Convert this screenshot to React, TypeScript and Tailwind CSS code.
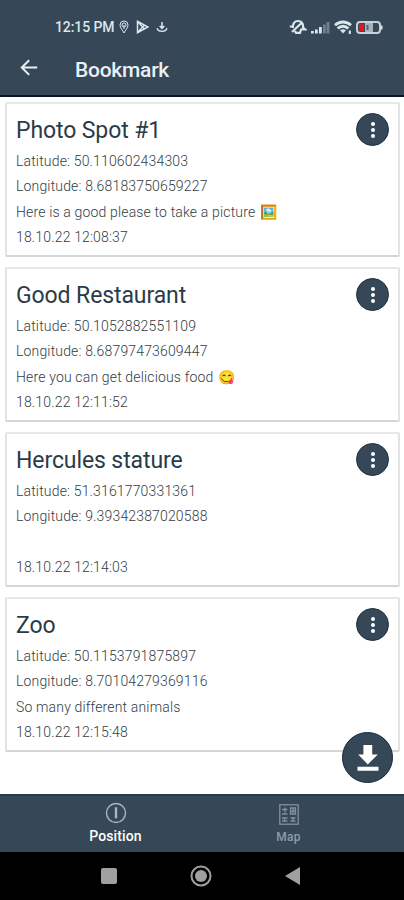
import React from "react";

type Bookmark = {
  title: string;
  latitude: string;
  longitude: string;
  note: string;
  emoji?: string;
  date: string;
};

const bookmarks: Bookmark[] = [
  {
    title: "Photo Spot #1",
    latitude: "50.110602434303",
    longitude: "8.68183750659227",
    note: "Here is a good please to take a picture",
    emoji: "🖼️",
    date: "18.10.22 12:08:37",
  },
  {
    title: "Good Restaurant",
    latitude: "50.1052882551109",
    longitude: "8.68797473609447",
    note: "Here you can get delicious food",
    emoji: "😋",
    date: "18.10.22 12:11:52",
  },
  {
    title: "Hercules stature",
    latitude: "51.3161770331361",
    longitude: "9.39342387020588",
    note: "",
    date: "18.10.22 12:14:03",
  },
  {
    title: "Zoo",
    latitude: "50.1153791875897",
    longitude: "8.70104279369116",
    note: "So many different animals",
    date: "18.10.22 12:15:48",
  },
];

export default function App() {
  return (
    <div className="relative flex h-[900px] w-[404px] flex-col overflow-hidden bg-white font-['Roboto',sans-serif]">
      <header className="h-[97px] shrink-0 border-b-2 border-[#0b1428] bg-[#364757]">
        <StatusBar />
        <div className="flex h-[42px] items-center pl-[20px]">
          <svg viewBox="0 0 18 18" className="mb-[12px] size-[18px] text-[#e9f0f5]" fill="none" stroke="currentColor" strokeWidth="2">
            <path d="M17.2 8.5H2M9.2 1.2 1.8 8.5l7.4 7.4" />
          </svg>
          <h1 className="mb-[9px] ml-[37px] text-[21px] leading-[28px] font-medium tracking-[-0.25px] text-[#e9f0f5]">Bookmark</h1>
        </div>
      </header>

      <main className="flex flex-1 flex-col gap-[10px] pt-[5px] pr-[4px] pl-[5px]">
        {bookmarks.map((b) => (
          <BookmarkCard key={b.title} bookmark={b} />
        ))}
      </main>

      <button aria-label="Download" className="absolute top-[732px] left-[342px] flex size-[51px] items-center justify-center rounded-full border border-[#14283a] bg-[#364757]">
        <svg viewBox="0 0 22 28" className="h-[28px] w-[22px] fill-white">
          <path d="M6.4 1h8.8v9.6h5.6l-10 9.8L1.2 10.6h5.2zM.5 22.7h21v4H.5z" />
        </svg>
      </button>

      <TabBar />
      <SystemNav />
    </div>
  );
}

const StatusBar = () => (
  <div className="flex h-[53px] justify-between pt-[17px] pr-[21px] pl-[55px] text-[#dce5ec]">
    <div className="flex h-5 items-center">
      <span className="w-[60px] text-[14px] font-medium tracking-[-0.1px] whitespace-nowrap">12:15 PM</span>
      {/* location */}
      <svg viewBox="0 0 10 14" className="ml-[4px] h-[14px] w-[10px]" fill="none" stroke="currentColor">
        <path d="M5 13C4 10.5 1 8 1 5a4 4 0 0 1 8 0c0 3-3 5.5-4 8z" />
        <circle cx="5" cy="5" r="2" />
        <path d="M5 5v4" />
      </svg>
      {/* play store */}
      <svg viewBox="0 0 13 14" className="ml-[7px] h-[14px] w-[13px]" fill="none" stroke="currentColor" strokeWidth="1.5">
        <path d="M1.500 1.3v11.4L12 7zM1.5 1.5 8.5 9M1.5 12.5 8.5 5" />
      </svg>
      {/* download */}
      <svg viewBox="0 0 12 12" className="ml-[7px] h-[12px] w-[12px]" fill="none" stroke="currentColor" strokeWidth="1.5">
        <path d="M6 1v6.5M3.700 5 6 7.400 8.300 5M1 7.200C2.500 11.300 9.500 11.300 11 7.200" />
      </svg>
    </div>
    <div className="flex h-5 items-center">
      {/* muted bell */}
      <svg viewBox="0 0 18 16" className="h-[16px] w-[18px]" fill="none" stroke="currentColor" strokeWidth="2.2">
        <path d="M4 9C3.500 4.500 5.500 2 9 2s5.500 2.500 5 6.500l2.300 2H12l-1 3.300H7L6 12M.8 7.500H5M3 13 13.500 3" />
      </svg>
      {/* signal */}
      <svg viewBox="0 0 19 13" className="ml-[4px] h-[13px] w-[19px]" fill="currentColor">
        <path d="M0 10h2.800v2.500H0zM4 8.500h2.800v4H4zM8 6h2.800v6.500H8z" />
        <path d="M12 3.500h2.800v9H12zM15.500 1h3v11.500h-3z" opacity=".35" />
      </svg>
      {/* wifi */}
      <svg viewBox="0 0 18 14" className="ml-[4px] h-[14px] w-[18px]" fill="none" stroke="currentColor" strokeWidth="2.800">
        <path d="M1 5.200c4.500-4.300 11.500-4.300 16 0M3.700 8.400c3-2.900 7.600-2.900 10.600 0" />
        <path d="M6 10.200c1.800-1.400 4.200-1.400 6 0L9 13.500z" fill="currentColor" stroke="none" />
        <path d="M15.800 10.500v3.500" strokeWidth="2" />
      </svg>
      {/* battery */}
      <svg viewBox="0 0 27 13" className="ml-[4px] h-[13px] w-[27px]">
        <rect x="1" y="1" width="23" height="11" rx="3" fill="#364757" stroke="#c8d1d8" strokeWidth="2" />
        <path d="M25 4.500h1.500v4H25z" fill="#dce5ec" />
        <path d="M3 3h5v7H3z" fill="#e01818" />
        <path d="M9 2h8v9H9z" fill="#a9b3bb" />
        <path d="M10.500 4h2v5h-2z" fill="#56636d" />
      </svg>
    </div>
  </div>
);

const BookmarkCard = ({ bookmark }: { bookmark: Bookmark }) => (
  <article className="flex h-[155px] shrink-0 justify-between rounded-[2px] border-2 border-t-[#e8e8e8] border-r-[#e3e3e3] border-b-[#d5d5d5] border-l-[#e3e3e3] bg-white pt-[9px] pr-[9px] pl-[9px]">
    <div className="pt-px text-[14px] leading-[25.500px] font-light tracking-[0.16px] whitespace-nowrap text-[#343d43]">
      <h2 className="mb-[1.500px] text-[23px] leading-[33px] font-normal tracking-[-0.1px] text-[#2b3b48]">{bookmark.title}</h2>
      <p>Latitude: {bookmark.latitude}</p>
      <p>Longitude: {bookmark.longitude}</p>
      <p className="flex h-[25.500px] items-center">
        {bookmark.note}
        {bookmark.emoji && <span className="ml-[5px] text-[14px]">{bookmark.emoji}</span>}
      </p>
      <p>{bookmark.date}</p>
    </div>
    <button aria-label="More" className="flex size-[33px] items-center justify-center rounded-full border border-[#1d3040] bg-[#364757]">
      <svg viewBox="0 0 4 16" className="h-[16px] w-[4px] fill-white">
        <circle cx="2" cy="2" r="2" />
        <circle cx="2" cy="8" r="2" />
        <circle cx="2" cy="14" r="2" />
      </svg>
    </button>
  </article>
);

const TabBar = () => (
  <nav className="flex h-[58px] shrink-0 border-t-2 border-[#263b49] bg-[#364757] px-[29px]">
    <div className="flex w-[173px] flex-col items-center pt-[6px] text-white">
      <svg viewBox="0 0 22 22" className="size-[22px]" fill="none" stroke="#a9b7c1" strokeWidth="1.400">
        <circle cx="11" cy="11" r="9.500" />
        <path d="M11 5.300v11" strokeWidth="2.400" />
      </svg>
      <span className="mt-[2px] text-[14px] leading-[20px] font-medium tracking-[0.1px]">Position</span>
    </div>
    <div className="flex w-[173px] flex-col items-center pt-[8px] text-[#8f9da7]">
      <svg viewBox="0 0 20 21" className="h-[21px] w-[20px]" fill="none" stroke="#82919c" strokeWidth="1.300">
        <rect x=".8" y=".8" width="18.400" height="19.400" />
        <path d="M3 5.500h5.500M6 3.500v5M3 10h5.500M11.500 4h5v6h-5zM14 4v6M11.500 7h5M3 14h5.500M11.500 14h5M3 17h5.500M11.500 17h5M5.500 14v3M14 14v3" />
      </svg>
      <span className="mt-[4px] text-[12px] leading-[16px] font-medium tracking-[0.3px]">Map</span>
    </div>
  </nav>
);

const SystemNav = () => (
  <div className="flex h-[48px] shrink-0 items-center bg-black pl-[101px]">
    <div className="size-[16px] rounded-[2px] bg-[#a0a0a0]" />
    <svg viewBox="0 0 22 22" className="ml-[73px] size-[22px]">
      <circle cx="11" cy="11" r="9.500" fill="none" stroke="#a0a0a0" strokeWidth="2" />
      <circle cx="11" cy="11" r="6" fill="#a0a0a0" />
    </svg>
    <svg viewBox="0 0 15 18" className="ml-[73px] h-[18px] w-[15px] fill-[#a0a0a0]">
      <path d="M15 0v18L0 9z" />
    </svg>
  </div>
);
